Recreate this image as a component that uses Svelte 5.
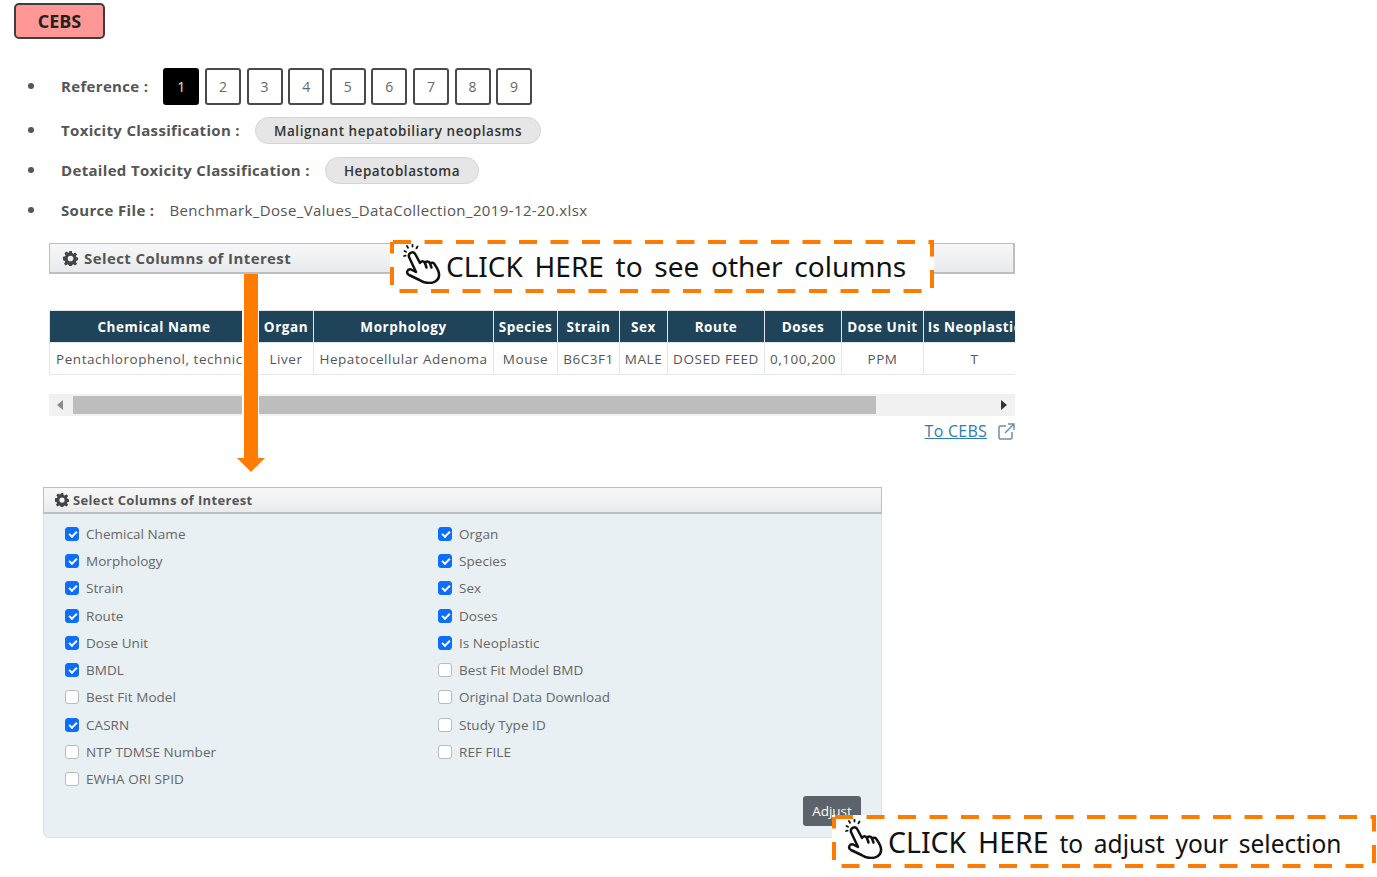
<script>
    const refs = [1, 2, 3, 4, 5, 6, 7, 8, 9];
    const columns = [
        { name: 'Chemical Name', w: 209, value: 'Pentachlorophenol, technic', left: true },
        { name: 'Organ', w: 55, value: 'Liver' },
        { name: 'Morphology', w: 180, value: 'Hepatocellular Adenoma' },
        { name: 'Species', w: 64, value: 'Mouse' },
        { name: 'Strain', w: 62, value: 'B6C3F1' },
        { name: 'Sex', w: 48, value: 'MALE' },
        { name: 'Route', w: 97, value: 'DOSED FEED' },
        { name: 'Doses', w: 77, value: '0,100,200' },
        { name: 'Dose Unit', w: 82, value: 'PPM' },
        { name: 'Is Neoplastic', w: 102, value: 'T' }
    ];
    const options = [
        ['Chemical Name', true], ['Organ', true],
        ['Morphology', true], ['Species', true],
        ['Strain', true], ['Sex', true],
        ['Route', true], ['Doses', true],
        ['Dose Unit', true], ['Is Neoplastic', true],
        ['BMDL', true], ['Best Fit Model BMD', false],
        ['Best Fit Model', false], ['Original Data Download', false],
        ['CASRN', true], ['Study Type ID', false],
        ['NTP TDMSE Number', false], ['REF FILE', false],
        ['EWHA ORI SPID', false]
    ];
</script>

{#snippet gear()}
    <svg class="gear" viewBox="0 0 16 16" aria-hidden="true">
        <path fill="#444" fill-rule="evenodd" d="M6.6 0h2.8l.4 2.2 1.3.6 1.9-1.3 2 2-1.3 1.9.6 1.3 2.2.4v2.8l-2.2.4-.6 1.3 1.3 1.9-2 2-1.9-1.3-1.3.6-.4 2.2H6.6l-.4-2.2-1.3-.6L3 15.500l-2-2 1.300-1.900-.6-1.300L0 9.900V6.100l2.200-.4.6-1.300L1.500 2.500l2-2 1.900 1.300 1.300-.6zM8 5a3 3 0 1 0 0 6 3 3 0 0 0 0-6z" />
    </svg>
{/snippet}

{#snippet hand()}
    <svg class="hand" viewBox="0 0 38 40" aria-hidden="true">
        <g fill="none" stroke="#111" stroke-width="2.500" stroke-linecap="round" stroke-linejoin="round">
            <path d="M6 13C5 8.500 10.500 6.500 12.500 10.500L17 19C18 16.500 21 16.500 22 19C23 17 26 17 27 19.500C28.500 18 31 18.500 32 21C34.500 24.500 36.500 28 36 32C35.500 36.500 31 39 26 39C22 39 19.500 38 16.500 36L6 31C2.500 29 4.500 24.500 8 25.500L13 28Z" />
            <path d="M22 19L23.500 23.500M27 19.500L28.500 23.500" />
        </g>
        <g stroke="#111" stroke-width="1.800" stroke-linecap="round">
            <path d="M1.500 7L3 7.800M4 2L5 3.800M9.500 .8L9.500 2.500M14.500 2.500L13.500 4.300M1 12L2.600 11.600" />
        </g>
    </svg>
{/snippet}

<div class="page">
    <button class="cebs">CEBS</button>

    <ul class="info">
        <li class="ref-row">
            <span class="label">Reference :</span>
            <div class="refs">
                {#each refs as r}
                    <span class="ref" class:active={r === 1}>{r}</span>
                {/each}
            </div>
        </li>
        <li class="tox-row">
            <span class="label">Toxicity Classification :</span>
            <span class="pill">Malignant hepatobiliary neoplasms</span>
        </li>
        <li class="detail-row">
            <span class="label">Detailed Toxicity Classification :</span>
            <span class="pill">Hepatoblastoma</span>
        </li>
        <li class="file-row">
            <span class="label">Source File :</span>
            <span class="file">Benchmark_Dose_Values_DataCollection_2019-12-20.xlsx</span>
        </li>
    </ul>

    <section class="results">
        <div class="bar">{@render gear()}Select Columns of Interest</div>

        <div class="table-wrap">
            <table>
                <thead>
                    <tr>
                        {#each columns as c}
                            <th style="width: {c.w}px">{c.name}</th>
                        {/each}
                    </tr>
                </thead>
                <tbody>
                    <tr>
                        {#each columns as c}
                            <td class:left={c.left}>{c.value}</td>
                        {/each}
                    </tr>
                </tbody>
            </table>
        </div>

        <div class="scrollbar">
            <span class="tri tri-left"></span>
            <div class="thumb"></div>
            <span class="tri tri-right"></span>
        </div>

        <div class="link-row">
            <a href="#cebs">To CEBS</a>
            <svg class="ext" viewBox="0 0 17 17" aria-hidden="true">
                <path fill="none" stroke="#6d8fa8" stroke-width="1.500" d="M8 3H2.500C1.500 3 1 3.500 1 4.500V14.500C1 15.500 1.500 16 2.500 16H12.500C13.500 16 14 15.500 14 14.500V9M10 1H16V7M16 1L7 10" />
            </svg>
        </div>
    </section>

    <section class="selector">
        <div class="selector-head">{@render gear()}Select Columns of Interest</div>
        <div class="selector-body">
            <div class="options">
                {#each options as [name, on]}
                    <label class="option">
                        <input type="checkbox" checked={on} />
                        <span>{name}</span>
                    </label>
                {/each}
            </div>
            <button class="adjust">Adjust</button>
        </div>
    </section>

    <!-- annotations drawn over the screenshot -->
    <div class="arrow-back"></div>
    <div class="arrow-shaft"></div>
    <div class="arrow-head"></div>

    <div class="callout callout-top">
        <svg class="dash" viewBox="0 0 544 53" aria-hidden="true">
            <rect x="2" y="2" width="540" height="49" />
        </svg>
        {@render hand()}
        <span class="callout-text">CLICK HERE to see other columns</span>
    </div>

    <div class="callout callout-bottom">
        <svg class="dash" viewBox="0 0 544 53" aria-hidden="true">
            <rect x="2" y="2" width="540" height="49" />
        </svg>
        {@render hand()}
        <span class="callout-text"><span class="big">CLICK HERE</span> to adjust your selection</span>
    </div>
</div>

<style>
    :global(body) {
        margin: 0;
        background: #fff;
    }

    .page {
        position: relative;
        width: 1377px;
        height: 877px;
        overflow: hidden;
        font-family: "Open Sans", "Liberation Sans", sans-serif;
        color: #555;
        font-size: 14px;
    }

    .cebs {
        display: block;
        position: relative;
        top: 3px;
        left: 14px;
        width: 91px;
        height: 36px;
        background: #ff9797;
        border: 2px solid #3d3d3d;
        border-radius: 5px;
        font: 700 18px "Open Sans", sans-serif;
        color: #222;
        padding: 0;
    }

    .info {
        list-style: none;
        margin: 31px 0 0;
        padding: 0 0 0 61px;
    }

    .info li {
        position: relative;
        display: flex;
        align-items: center;
    }

    .info li::before {
        content: "";
        position: absolute;
        left: -33px;
        top: 50%;
        width: 6px;
        height: 6px;
        margin-top: -3px;
        border-radius: 50%;
        background: #555;
    }

    .ref-row {
        height: 38px;
    }

    .tox-row {
        height: 28px;
        margin-top: 11px;
    }

    .detail-row {
        height: 28px;
        margin-top: 12px;
    }

    .file-row {
        height: 28px;
        margin-top: 12px;
    }

    .label {
        font-weight: 700;
        font-size: 15px;
        letter-spacing: .33px;
        color: #555;
    }

    .refs {
        display: flex;
        gap: 5.600px;
        margin-left: 15px;
    }

    .ref {
        box-sizing: border-box;
        width: 36px;
        height: 37px;
        display: flex;
        align-items: center;
        justify-content: center;
        border: 2px solid #4a4a4a;
        border-radius: 3px;
        font-size: 14px;
        color: #666;
    }

    .ref.active {
        background: #000;
        border-color: #000;
        color: #f4e9c8;
    }

    .pill {
        box-sizing: border-box;
        height: 27px;
        display: inline-flex;
        align-items: center;
        margin-left: 15px;
        padding: 2px 18px 0;
        background: #e6e6e6;
        border: 1px solid #d4d4d4;
        border-radius: 14px;
        font-weight: 600;
        font-size: 13.500px;
        letter-spacing: .55px;
        color: #333;
    }

    .file {
        margin-left: 15px;
        font-size: 15px;
        letter-spacing: .38px;
        color: #555;
    }

    .results {
        width: 966px;
        margin: 19px 0 0 49px;
    }

    .bar {
        box-sizing: border-box;
        height: 31px;
        display: flex;
        align-items: center;
        padding-left: 13px;
        background: linear-gradient(#f7f7f8, #e9eaee);
        border: 2px solid #bcbec2;
        border-width: 1px 2px 2px 1px;
        font-weight: 700;
        font-size: 15px;
        letter-spacing: .4px;
        color: #555;
    }

    .gear {
        width: 15px;
        height: 15px;
        margin-right: 6px;
    }

    .table-wrap {
        margin-top: 36px;
        overflow: hidden;
    }

    table {
        width: 976px;
        table-layout: fixed;
        border-collapse: collapse;
    }

    th {
        box-sizing: border-box;
        height: 32px;
        padding: 0;
        background: #1f4459;
        color: #fff;
        font-size: 13.500px;
        letter-spacing: .55px;
        font-weight: 700;
        border: 1px solid #dfe5ea;
        white-space: nowrap;
        overflow: hidden;
    }

    td {
        box-sizing: border-box;
        height: 32px;
        padding: 0;
        text-align: center;
        font-size: 13.500px;
        letter-spacing: .55px;
        color: #555;
        border: 1px solid #e3e7ec;
        white-space: nowrap;
        overflow: hidden;
    }

    td.left {
        text-align: left;
        padding-left: 6px;
    }

    .scrollbar {
        display: flex;
        align-items: center;
        height: 22px;
        margin-top: 19px;
        background: #f1f1f1;
        position: relative;
    }

    .thumb {
        margin-left: 24px;
        width: 803px;
        height: 18px;
        background: #bdbdbd;
    }

    .tri {
        position: absolute;
        top: 6px;
        border: 5px solid transparent;
    }

    .tri-left {
        left: 3px;
        border-right: 6px solid #8a8a8a;
    }

    .tri-right {
        right: 3px;
        border-left: 6px solid #333;
    }

    .link-row {
        display: flex;
        justify-content: flex-end;
        align-items: center;
        gap: 11px;
        margin-top: 5px;
        height: 20px;
    }

    .link-row a {
        font-size: 16px;
        letter-spacing: .25px;
        color: #2f7cb0;
        text-decoration: underline;
    }

    .ext {
        width: 17px;
        height: 17px;
    }

    .selector {
        box-sizing: border-box;
        width: 839px;
        margin: 46px 0 0 43px;
        height: 351px;
        display: flex;
        flex-direction: column;
        background: #e9f0f3;
        border: 1px solid #dbe2e6;
        border-top: 0;
        border-radius: 0 0 6px 6px;
    }

    .selector-head {
        box-sizing: border-box;
        height: 27px;
        margin: 0 -1px;
        display: flex;
        align-items: center;
        padding-left: 11px;
        background: linear-gradient(#f8f8f9, #eaebee);
        border: 1px solid #bcbec2;
        border-bottom-width: 2px;
        font-weight: 700;
        font-size: 13px;
        letter-spacing: .35px;
        color: #555;
    }

    .selector-head .gear {
        width: 14px;
        height: 14px;
        margin-right: 4px;
    }

    .selector-body {
        position: relative;
        flex: 1;
        padding: 6px 0 0 21px;
    }

    .options {
        display: grid;
        grid-template-columns: 373px 373px;
        grid-auto-rows: 27.300px;
    }

    .option {
        display: flex;
        align-items: center;
        gap: 7px;
        font-size: 13.500px;
        letter-spacing: .05px;
        color: #666;
    }

    .option input {
        appearance: none;
        position: relative;
        box-sizing: border-box;
        flex: none;
        width: 14px;
        height: 14px;
        margin: 0;
        background: #fff;
        border: 1px solid #b8bcc0;
        border-radius: 3px;
    }

    .option input:checked {
        background: #0d6efd;
        border-color: #0d6efd;
    }

    .option input:checked::after {
        content: "";
        position: absolute;
        left: 3px;
        top: 3px;
        width: 6px;
        height: 3px;
        border-left: 2px solid #fff;
        border-bottom: 2px solid #fff;
        transform: rotate(-45deg);
    }

    .adjust {
        position: absolute;
        right: 20px;
        bottom: 11px;
        width: 58px;
        height: 30px;
        padding: 0;
        background: #5c636a;
        border: 0;
        border-radius: 3px;
        font: 13.500px "Open Sans", sans-serif;
        color: #fff;
    }

    .arrow-back {
        position: absolute;
        left: 242px;
        top: 274px;
        width: 17px;
        height: 150px;
        background: #fff;
    }

    .arrow-shaft {
        position: absolute;
        left: 244px;
        top: 274px;
        width: 14px;
        height: 185px;
        background: #ff7c00;
    }

    .arrow-head {
        position: absolute;
        left: 237px;
        top: 458px;
        width: 0;
        height: 0;
        border: 14px solid transparent;
        border-top: 14px solid #ff7c00;
        border-bottom: 0;
    }

    .callout {
        position: absolute;
        box-sizing: border-box;
        width: 544px;
        height: 53px;
        background: #fff;
        display: flex;
        align-items: center;
        color: #111;
    }

    .callout-top {
        left: 390px;
        top: 240px;
        padding-left: 13px;
    }

    .callout-bottom {
        left: 832px;
        top: 815px;
        padding-left: 13px;
    }

    .dash {
        position: absolute;
        left: 0;
        top: 0;
        width: 544px;
        height: 53px;
    }

    .dash rect {
        fill: none;
        stroke: #ff7c00;
        stroke-width: 4;
        stroke-dasharray: 18 13.500;
        stroke-dashoffset: -1;
    }

    .hand {
        position: relative;
        width: 38px;
        height: 40px;
        margin-top: -6px;
        flex: none;
    }

    .callout-text {
        position: relative;
        font-family: "Noto Sans", "Open Sans", sans-serif;
        font-size: 28px;
        word-spacing: 4.400px;
        margin: -2px 0 0 5px;
        white-space: nowrap;
    }

    .callout-bottom .callout-text {
        font-size: 24.500px;
        margin: 0 0 0 5px;
    }

    .callout-bottom .big {
        font-size: 28.500px;
    }
</style>
